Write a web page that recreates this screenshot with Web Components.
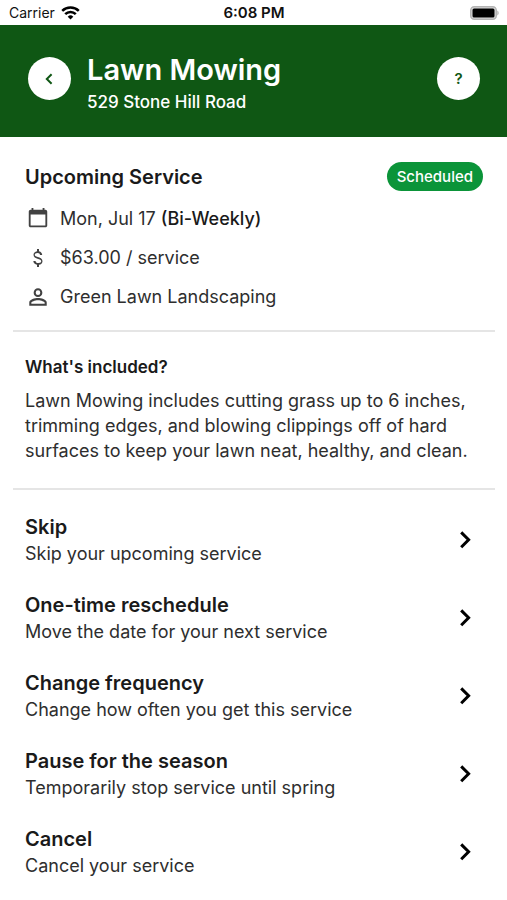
<!DOCTYPE html>
<html lang="en">
<head>
<meta charset="utf-8">
<meta name="viewport" content="width=device-width, initial-scale=1">
<title>Lawn Mowing</title>
<style>
  body {
    margin: 0;
    background: #fff;
    color: #1f1f1f;
    font-family: Inter, "Liberation Sans", sans-serif;
    font-size: 17px;
    line-height: 24px;
  }
</style>
</head>
<body>
<service-screen></service-screen>

<script>
const define = (name, html) => {
  const template = document.createElement("template");
  template.innerHTML = html;
  customElements.define(name, class extends HTMLElement {
    constructor() {
      super();
      this.attachShadow({ mode: "open" }).append(template.content.cloneNode(true));
    }
  });
};

define("status-bar", `
  <style>
    :host {
      display: grid;
      grid-template-columns: 1fr auto 1fr;
      align-items: center;
      padding: 1px 8px 0 9px;
      font-size: 14px;
      line-height: 24px;
      color: #111;
    }
    .carrier { display: flex; align-items: center; gap: 6px; }
    .time { font-size: 15px; font-weight: 600; }
    .battery { justify-self: end; }
    svg { display: block; }
  </style>
  <div class="carrier">
    <span>Carrier</span>
    <svg width="19" height="14" viewBox="0 0 19 14" fill="none" stroke="#000" stroke-width="2.5" aria-label="Wi-Fi" role="img">
      <path d="M1.2 4.9a11.8 11.8 0 0 1 16.6 0"/>
      <path d="M4.2 8.1a7.5 7.5 0 0 1 10.6 0"/>
      <path d="M6.7 10.7a4 4 0 0 1 5.6 0L9.5 13.6z" fill="#000" stroke="none"/>
    </svg>
  </div>
  <span class="time">6:08 PM</span>
  <svg class="battery" width="29" height="14" viewBox="0 0 29 14" aria-label="Battery full" role="img">
    <rect x=".75" y=".75" width="25.5" height="12.5" rx="3.5" fill="#ddd" stroke="#b4b4b4" stroke-width="1.5"/>
    <rect x="2.5" y="2.5" width="22" height="9" rx="1.5" fill="#000"/>
    <path d="M27.4 4.6c1.6.7 1.6 4.1 0 4.8z" fill="#aaa"/>
  </svg>
`);

define("round-button", `
  <style>
    :host { display: block; flex: none; }
    button {
      display: grid;
      place-items: center;
      width: 43px;
      height: 43px;
      padding: 0;
      border: 0;
      border-radius: 50%;
      background: #fff;
      color: #0f5714;
      font: 600 15px/24px Inter, "Liberation Sans", sans-serif;
      cursor: pointer;
    }
  </style>
  <button type="button"><slot></slot></button>
`);

define("page-header", `
  <style>
    :host {
      display: flex;
      align-items: center;
      padding: 25px 27px 23px 28px;
      background: #0f5714;
      color: #fff;
    }
    round-button { padding-bottom: 7px; }
    .titles { flex: 1; min-width: 0; padding-left: 16px; }
    h1 { margin: 0; font-size: 29px; line-height: 40px; font-weight: 600; }
    p { margin: 0; font-weight: 500; }
    svg { display: block; }
  </style>
  <round-button>
    <svg width="10" height="14" viewBox="0 0 10 14" fill="none" stroke="currentColor" stroke-width="2" role="img" aria-label="Back"><path d="M6.6 2.2 1.8 7l4.800 4.800"/></svg>
  </round-button>
  <div class="titles">
    <h1><slot name="title"></slot></h1>
    <p><slot name="address"></slot></p>
  </div>
  <round-button>?</round-button>
`);

define("status-badge", `
  <style>
    :host {
      display: block;
      padding: 3px 10px 2px;
      border-radius: 15px;
      background: #0b9439;
      color: #fff;
      font-size: 15px;
      line-height: 24px;
      font-weight: 500;
    }
  </style>
  <slot></slot>
`);

define("info-row", `
  <style>
    :host { display: flex; align-items: center; gap: 10px; padding-left: 1px; color: #2e2e2e; }
    ::slotted(svg) { display: block; flex: none; }
  </style>
  <slot name="icon"></slot>
  <span><slot></slot></span>
`);

define("card-section", `
  <style>
    :host { display: block; margin: 0 12px 0 13px; padding: 23px 12px 25px; }
    :host([divided]) { border-bottom: 2px solid #e5e5e5; }
  </style>
  <slot></slot>
`);

define("action-item", `
  <style>
    :host { display: block; }
    button {
      display: flex;
      align-items: center;
      justify-content: space-between;
      width: 100%;
      padding: 0 10px 0 0;
      border: 0;
      background: none;
      text-align: left;
      font: inherit;
      color: #2e2e2e;
      cursor: pointer;
    }
    .text, .name, .note { display: block; }
    .name { font-size: 20px; line-height: 28px; font-weight: 600; color: #1a1a1a; }
    .note { font-size: 18px; line-height: 25px; }
    svg { display: block; flex: none; }
  </style>
  <button type="button">
    <span class="text">
      <span class="name"><slot name="name"></slot></span>
      <span class="note"><slot></slot></span>
    </span>
    <svg width="16" height="20" viewBox="0 0 16 20" fill="none" stroke="#000" stroke-width="3" aria-hidden="true"><path d="M4.2 2.4 11.600 9.800 4.2 17.2"/></svg>
  </button>
`);

define("service-screen", `
  <style>
    :host { display: block; }
    h2, h3, p { margin: 0; }
    .heading { display: flex; align-items: center; justify-content: space-between; }
    h2 { font-size: 20px; line-height: 28px; font-weight: 600; color: #1a1a1a; }
    h3 { font-size: 17px; line-height: 24px; font-weight: 600; color: #1a1a1a; }
    .rows { display: grid; gap: 15px; padding-top: 16px; font-size: 18px; }
    b { font-weight: 500; color: #1a1a1a; }
    .details { padding-top: 9px; font-size: 18px; line-height: 25px; color: #2e2e2e; }
    .actions { display: grid; gap: 25px; }
    .summary { padding-top: 25px; padding-bottom: 21px; }
  </style>
  <status-bar></status-bar>
  <page-header>
    <span slot="title">Lawn Mowing</span>
    <span slot="address">529 Stone Hill Road</span>
  </page-header>
  <main>
    <card-section divided class="summary">
      <div class="heading"><h2>Upcoming Service</h2><status-badge>Scheduled</status-badge></div>
      <div class="rows">
        <info-row>
          <svg slot="icon" width="24" height="24" viewBox="-1 0 26 26" fill="#424242" aria-hidden="true"><path d="M20 3h-1V1h-2v2H7V1H5v2H4c-1.100 0-2 .9-2 2v15c0 1.100.9 2 2 2h16c1.100 0 2-.9 2-2V5c0-1.100-.9-2-2-2zm0 17H4V8h16v12z"/></svg>
          Mon, Jul 17 <b>(Bi-Weekly)</b>
        </info-row>
        <info-row>
          <svg slot="icon" width="24" height="24" viewBox="0 0 24 24" fill="#424242" aria-hidden="true"><path d="M11.800 10.900c-2.270-.59-3-1.200-3-2.150 0-1.090 1.010-1.850 2.700-1.850 1.780 0 2.440.85 2.500 2.100h2.210c-.07-1.720-1.120-3.300-3.210-3.810V3h-2v2.160c-1.940.42-3.500 1.680-3.500 3.610 0 2.310 1.910 3.460 4.700 4.130 2.500.6 3 1.480 3 2.410 0 .69-.49 1.790-2.700 1.790-2.060 0-2.870-.92-2.980-2.100h-2.200c.12 2.190 1.760 3.420 3.680 3.830V21h2v-2.150c1.950-.37 3.500-1.500 3.500-3.550 0-2.840-2.430-3.810-4.700-4.400z"/></svg>
          $63.00 / service
        </info-row>
        <info-row>
          <svg slot="icon" width="24" height="24" viewBox="1 1 22 22" fill="#424242" aria-hidden="true"><path d="M12 5.900a2.100 2.100 0 1 1 0 4.200 2.100 2.100 0 0 1 0-4.200m0 9c2.970 0 6.100 1.460 6.100 2.100v1.100H5.900V17c0-.64 3.130-2.100 6.100-2.100M12 4C9.790 4 8 5.790 8 8s1.790 4 4 4 4-1.790 4-4-1.790-4-4-4zm0 9c-2.670 0-8 1.340-8 4v3h16v-3c0-2.660-5.330-4-8-4z"/></svg>
          Green Lawn Landscaping
        </info-row>
      </div>
    </card-section>
    <card-section divided>
      <h3>What's included?</h3>
      <p class="details">Lawn Mowing includes cutting grass up to 6 inches, trimming edges, and blowing clippings off of hard surfaces to keep your lawn neat, healthy, and clean.</p>
    </card-section>
    <card-section>
      <div class="actions">
        <action-item><span slot="name">Skip</span>Skip your upcoming service</action-item>
        <action-item><span slot="name">One-time reschedule</span>Move the date for your next service</action-item>
        <action-item><span slot="name">Change frequency</span>Change how often you get this service</action-item>
        <action-item><span slot="name">Pause for the season</span>Temporarily stop service until spring</action-item>
        <action-item><span slot="name">Cancel</span>Cancel your service</action-item>
      </div>
    </card-section>
  </main>
`);
</script>
</body>
</html>
